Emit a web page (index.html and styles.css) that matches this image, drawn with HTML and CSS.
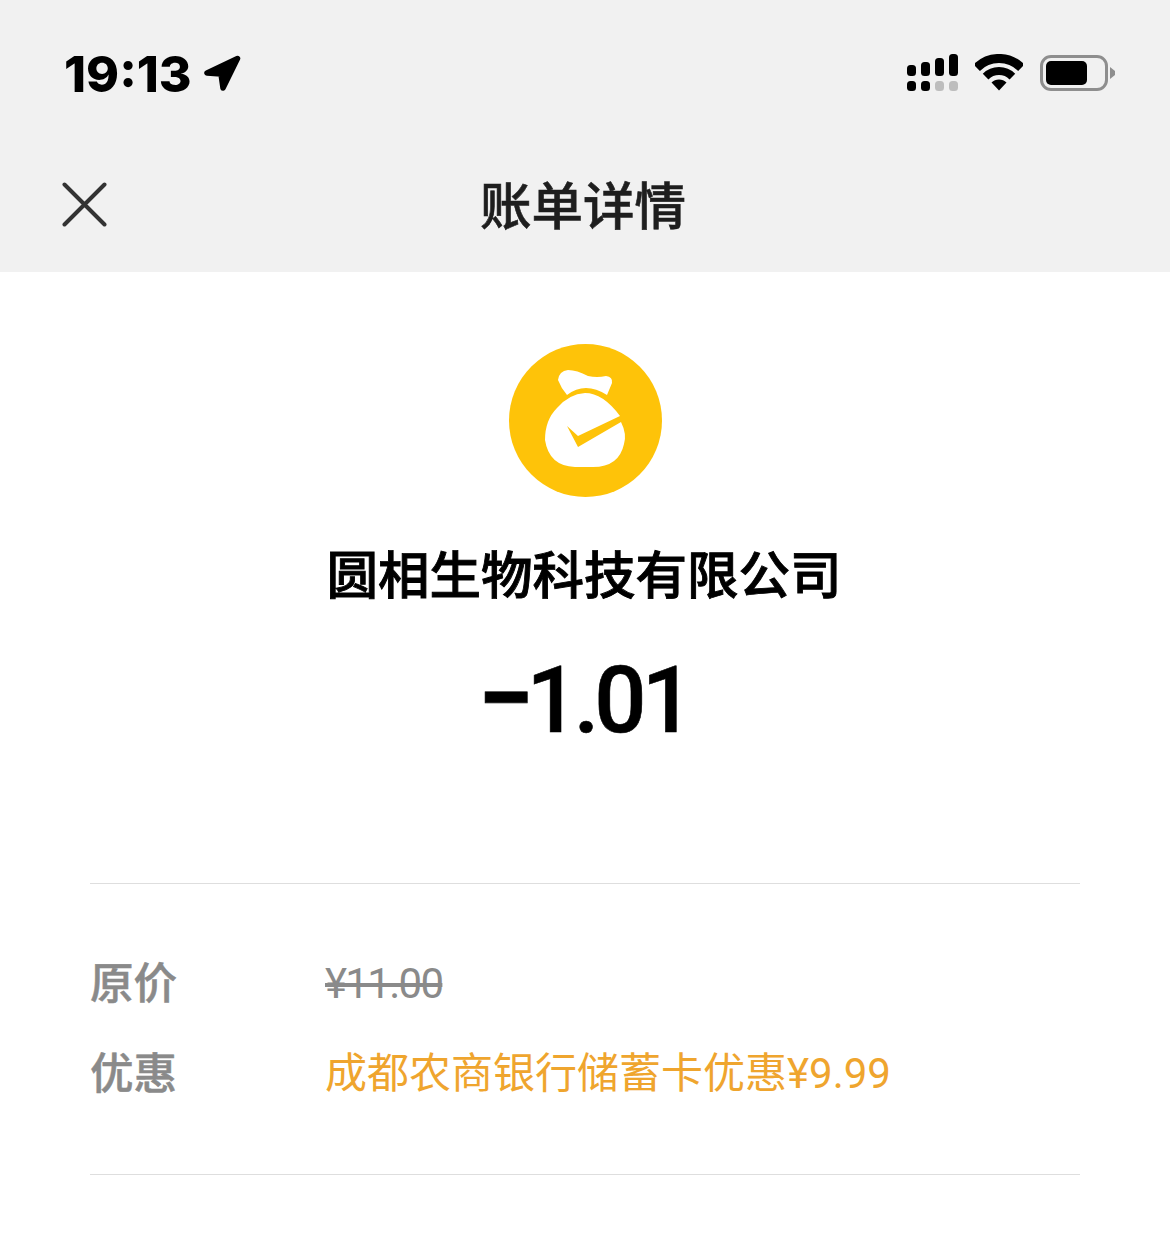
FILE: index.html
```html
<!DOCTYPE html>
<html lang="zh">
<head>
<meta charset="utf-8">
<title>账单详情</title>
<link rel="stylesheet" href="styles.css">
</head>
<body>
<header class="top">
  <div class="status">
    <div class="status-left">
      <span class="time">19:13</span>
      <svg class="icon" width="38" height="38" viewBox="0 0 38 38"><path d="M34.5 4.5 L4 19 L18 20 L20 34 Z" fill="#000" stroke="#000" stroke-width="5.5" stroke-linejoin="round"/></svg>
    </div>
    <div class="status-right">
      <svg class="icon" width="51" height="37" viewBox="0 0 51 37"><g fill="#000"><rect x="0" y="11" width="9" height="11" rx="3.5"/><rect x="14" y="8" width="9" height="14" rx="3.5"/><rect x="28" y="4" width="9" height="18" rx="3.5"/><rect x="42" y="0" width="9" height="22" rx="3.5"/><rect x="0" y="27" width="9" height="10" rx="3.5"/><rect x="14" y="27" width="9" height="10" rx="3.5"/></g><g fill="#bdbdbd"><rect x="28" y="27" width="9" height="10" rx="3.5"/><rect x="42" y="27" width="9" height="10" rx="3.5"/></g></svg>
      <svg class="icon" width="48" height="37" viewBox="0 0 48 37"><path d="M1.7 13.7 A31.5 31.5 0 0 1 46.3 13.7" fill="none" stroke="#000" stroke-width="9"/><path d="M10.6 22.6 A19 19 0 0 1 37.4 22.6" fill="none" stroke="#000" stroke-width="8"/><path d="M24 36.5 L16.5 28.5 A10.6 10.6 0 0 1 31.5 28.5 Z" fill="#000"/></svg>
      <div class="battery"><div class="battery-body"><div class="battery-fill"></div></div><svg class="icon" width="5" height="12" viewBox="0 0 5 12"><path d="M0 0 L5 4 V8 L0 12 Z" fill="#8e8e8e"/></svg></div>
    </div>
  </div>
  <div class="nav">
    <svg class="close" width="46" height="46" viewBox="0 0 46 46"><path d="M2.5 2.5 L42.5 42.5 M42.5 2.5 L2.5 42.5" stroke="#333" stroke-width="4" stroke-linecap="round" fill="none"/></svg>
    <h1 class="nav-title">账单详情</h1>
  </div>
</header>
<main class="content">
  <svg class="logo" width="153" height="153" viewBox="0 0 153 153"><circle cx="76.5" cy="76.5" r="76.5" fill="#fec309"/><path d="M49 36 Q50 27 59 26 Q68 26 79 32 Q88 34 97 32 Q104 33 103 39 L98 51 Q76 37 58 51 Q52 44 49 36 Z" fill="#fff"/><path d="M76 49 Q94 49 111 72 L69 92 L58 82 L69 103 L112 78 Q118 90 115 100 Q110 123 84 123 H66 Q40 122 36 96 Q36 76 48 64 Q60 50 76 49 Z" fill="#fff"/></svg>
  <div class="merchant">圆相生物科技有限公司</div>
  <div class="amount"><span class="minus">−</span><span>1.01</span></div>
  <div class="rule first"></div>
  <div class="rows">
    <div class="row"><span class="label">原价</span><span class="value struck">¥11.00</span></div>
    <div class="row"><span class="label">优惠</span><span class="value promo">成都农商银行储蓄卡优惠¥9.99</span></div>
  </div>
  <div class="rule"></div>
</main>
</body>
</html>
```
FILE: styles.css
```css
* { box-sizing: border-box; }
html, body { margin: 0; padding: 0; }
body { width: 1170px; height: 1236px; background: #fff; font-family: "Noto Sans CJK SC", "Liberation Sans", sans-serif; overflow: hidden; }
.icon { display: block; flex: none; }
.top { background: #f1f1f1; height: 272px; display: flex; flex-direction: column; }
.status { display: flex; justify-content: space-between; align-items: center; padding: 54px 55px 24px 64px; height: 115px; }
.status-left { display: flex; align-items: center; gap: 11px; }
.time { font-family: Inter, "Liberation Sans", sans-serif; font-weight: 800; font-size: 50px; line-height: 38px; color: #000; margin-top: 2px; }
.status-right { display: flex; align-items: center; gap: 17px; }
.battery { display: flex; align-items: center; gap: 2px; }
.battery-body { width: 68px; height: 36px; border: 3px solid #8e8e8e; border-radius: 11px; padding: 3px; }
.battery-fill { width: 41px; height: 100%; background: #000; border-radius: 5px; }
.nav { flex: 1; display: grid; grid-template-columns: 1fr auto 1fr; align-items: center; padding: 18px 8px 0 4px; }
.close { display: block; margin: 4px 0 0 58px; }
.nav-title { grid-column: 2; margin: 0; font-weight: 500; font-size: 51.5px; color: #1e1e1e; line-height: 60px; -webkit-text-stroke: 0.6px #1e1e1e; }
.content { display: flex; flex-direction: column; align-items: center; padding: 72px 90px 0; }
.logo { display: block; flex: none; }
.merchant { margin-top: 41px; font-size: 51.5px; font-weight: 500; line-height: 68px; color: #000; margin-left: -2px; -webkit-text-stroke: 0.9px #000; }
.amount { margin-top: 40px; font-family: Roboto, sans-serif; font-weight: 500; font-size: 92px; line-height: 104px; letter-spacing: -5px; color: #000; margin-left: -3px; display: flex; align-items: baseline; -webkit-text-stroke: 0.6px #000; }
.minus { font-weight: 700; font-size: 100px; letter-spacing: -7px; }
.rule { width: 100%; height: 1px; background: #dedede; flex: none; }
.rule.first { margin-top: 130px; }
.rows { width: 100%; padding: 66px 0 74px; display: flex; flex-direction: column; gap: 30px; }
.row { display: flex; align-items: center; height: 60px; }
.label { width: 235px; font-size: 43.5px; color: #8a8a8a; font-weight: 500; -webkit-text-stroke: 0.5px #8a8a8a; }
.value { font-size: 42px; font-family: Roboto, "Noto Sans CJK SC", sans-serif; }
.struck { color: #8a8a8a; text-decoration: line-through; letter-spacing: -1.7px; margin-top: 7px; }
.promo { color: #efa52e; margin-bottom: 2px; }
```
